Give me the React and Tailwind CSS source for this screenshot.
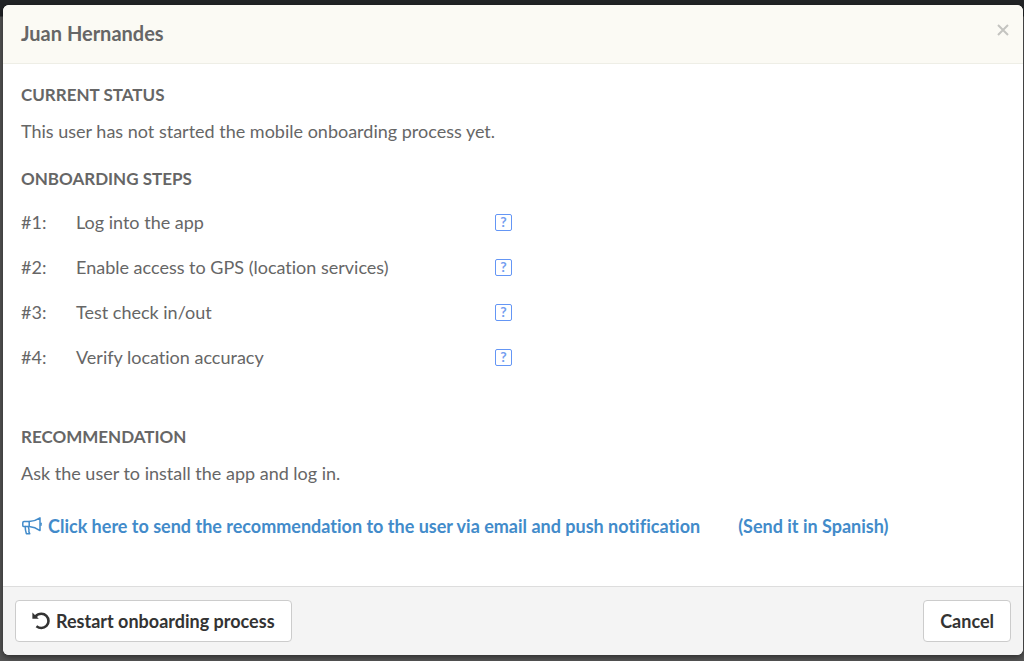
const steps = [
  "Log into the app",
  "Enable access to GPS (location services)",
  "Test check in/out",
  "Verify location accuracy",
];

function BullhornIcon() {
  return (
    <svg
      className="h-[18px] w-[21px] shrink-0"
      viewBox="0 0 21 18"
      fill="none"
      stroke="currentColor"
      strokeWidth="1.5"
      strokeLinejoin="round"
      strokeLinecap="round"
      aria-hidden="true"
    >
      <path d="M8.2 4.6H3Q1.8 4.6 1.8 5.8V8.4Q1.8 9.6 3 9.6H8.2Z" />
      <path d="M8.2 4.6Q14 4.2 19 .8V13.6Q14 10 8.2 9.6" />
      <path d="M4.2 9.6Q4.2 13.5 5.4 16.8H8.8Q7.4 14.6 8 12.8L7.4 9.8" />
      <path d="M20 6.2V8.2" />
    </svg>
  );
}

function UndoIcon() {
  return (
    <svg
      className="h-[18px] w-[18px] shrink-0"
      viewBox="0 0 18 18"
      fill="none"
      stroke="currentColor"
      strokeWidth="2.6"
      aria-hidden="true"
    >
      <path d="M3.4 4.6Q5.8 1.8 9.4 1.8A7.1 7.1 0 0 1 9.4 16Q6.8 16 4.4 14.2" />
      <path d="M.4 .6V6.8H6.8Z" fill="currentColor" stroke="none" />
    </svg>
  );
}

function HelpButton({ label }) {
  return (
    <button
      type="button"
      aria-label={`Help: ${label}`}
      className="flex h-[17px] w-[17px] items-center justify-center rounded-[2px] border border-[#6496f5] text-sm leading-none font-bold text-[#74a0f0]"
    >
      ?
    </button>
  );
}

function SectionTitle({ children }) {
  return <h3 className="text-[17px] leading-6 font-bold uppercase">{children}</h3>;
}

function FooterButton({ children }) {
  return (
    <button
      type="button"
      className="flex h-[42px] items-center gap-1.5 rounded border border-[#ccc] bg-white px-4 font-bold text-[#333]"
    >
      {children}
    </button>
  );
}

export default function App() {
  return (
    <div className="min-h-screen bg-[#555] bg-linear-to-b from-[#222426] from-[16px] to-[#555] to-[17px] pt-[5px] pr-px pb-1.5 pl-[3px] font-['Lato','Open_Sans',sans-serif] text-lg leading-6 text-[#666] [font-variant-ligatures:none]">
      <div
        role="dialog"
        aria-labelledby="dialog-title"
        className="overflow-hidden rounded-md bg-white shadow-[0_2px_6px_rgba(0,0,0,0.5)]"
      >
        <header className="flex items-start justify-between border-b border-[#eeeee6] bg-[#fbfaf4] px-[18px] pt-4 pb-[18px]">
          <h2 id="dialog-title" className="text-xl leading-6 font-bold">
            Juan Hernandes
          </h2>
          <button type="button" aria-label="Close" className="-mr-2 px-1 py-[3px] text-[#c4c4c0]">
            <svg className="h-3 w-3" viewBox="0 0 12 12" stroke="currentColor" strokeWidth="2" aria-hidden="true">
              <path d="M1 1L11 11M11 1L1 11" />
            </svg>
          </button>
        </header>

        <div className="px-[18px] pt-[19px] pb-12">
          <SectionTitle>Current status</SectionTitle>
          <p className="mt-3">This user has not started the mobile onboarding process yet.</p>

          <div className="mt-6">
            <SectionTitle>Onboarding steps</SectionTitle>
          </div>
          <ol className="mt-[19px] space-y-[21px]">
            {steps.map((step, i) => (
              <li key={step} className="grid grid-cols-[55px_419px_auto] items-center justify-start">
                <span>#{i + 1}:</span>
                <span>{step}</span>
                <HelpButton label={step} />
              </li>
            ))}
          </ol>

          <div className="mt-14">
            <SectionTitle>Recommendation</SectionTitle>
          </div>
          <p className="mt-3">Ask the user to install the app and log in.</p>
          <div className="mt-[29px] flex gap-[38px] font-bold text-[#428bca]">
            <a href="#send" className="flex items-center gap-1.5">
              <BullhornIcon />
              Click here to send the recommendation to the user via email and push notification
            </a>
            <a href="#send-spanish">(Send it in Spanish)</a>
          </div>
        </div>

        <footer className="flex justify-between border-t border-[#ddd] bg-[#f4f4f4] px-3 py-[13px]">
          <FooterButton>
            <UndoIcon />
            Restart onboarding process
          </FooterButton>
          <FooterButton>Cancel</FooterButton>
        </footer>
      </div>
    </div>
  );
}
